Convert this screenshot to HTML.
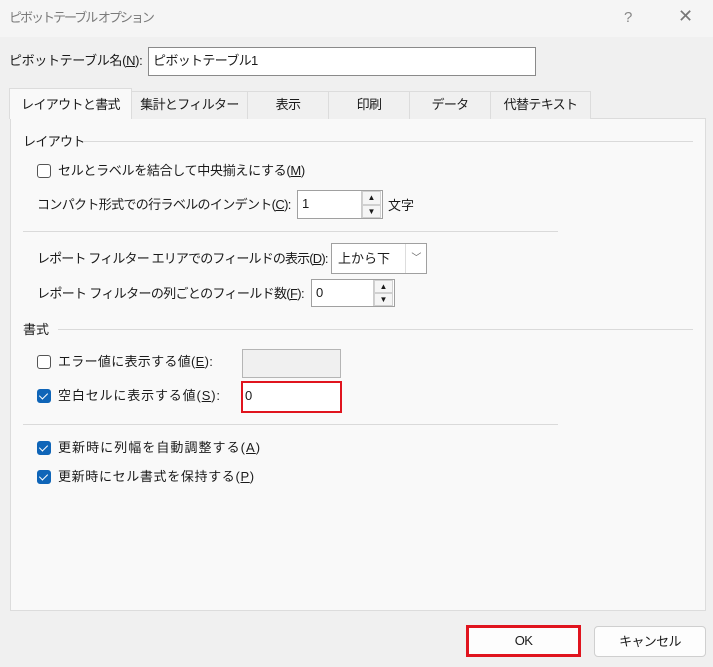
<!DOCTYPE html>
<html><head><meta charset="utf-8"><style>
*{box-sizing:border-box;margin:0;padding:0}
body{width:713px;height:667px;background:#f0f0f0;font-family:"Liberation Sans","Noto Sans CJK JP",sans-serif;font-size:13px;letter-spacing:-0.65px;color:#1a1a1a;position:relative;overflow:hidden}
.a{position:absolute;white-space:nowrap;line-height:18px}
.title{position:absolute;left:0;top:0;width:713px;height:37px;background:#f5f5f5}
.box{position:absolute;background:#fff;border:1px solid #a0a0a0}
.tab{position:absolute;top:91px;height:28px;border:1px solid #dcdcdc;border-bottom:none;background:#f0f0f0;text-align:center;line-height:26px}
.panel{position:absolute;left:10px;top:118px;width:696px;height:493px;background:#f9f9f9;border:1px solid #dcdcdc}
.hl{position:absolute;height:1px;background:#dadada}
.cb{position:absolute;width:14px;height:14px;border:1px solid #555;border-radius:3px;background:#fff}
.cb.on{background:#0f65b8;border-color:#0f65b8}
.cb.on:after{content:"";position:absolute;left:3px;top:1px;width:4px;height:7px;border:solid #fff;border-width:0 1.5px 1.5px 0;transform:rotate(45deg)}
.spin{position:absolute;width:20px;border-left:1px solid #ccc;background:#f5f5f5;letter-spacing:0}
.spin div{height:50%;border:1px solid #d0d0d0;font-size:8px;text-align:center;line-height:11px}
u{text-decoration:underline}
.btn{position:absolute;background:#fdfdfd;border:1px solid #cfcfcf;border-radius:4px;text-align:center;line-height:29px}
</style></head><body>
<div class="title"></div>
<div class="a" style="left:9px;top:9px;color:#7a7a7a;letter-spacing:-2px">ピボットテーブル オプション</div>
<div class="a" style="left:624px;top:9px;color:#888;font-size:15px">?</div>
<div class="a" style="left:678px;top:7px;color:#777;font-size:18px">✕</div>

<div class="a" style="left:9px;top:52px;letter-spacing:-0.35px">ピボットテーブル名(<u>N</u>):</div>
<div class="box" style="left:148px;top:47px;width:388px;height:29px;border-color:#8a8a8a"></div>
<div class="a" style="left:153px;top:52px">ピボットテーブル1</div>

<div class="panel"></div>
<div class="tab" style="left:131px;width:117px">集計とフィルター</div>
<div class="tab" style="left:247px;width:82px">表示</div>
<div class="tab" style="left:328px;width:82px">印刷</div>
<div class="tab" style="left:409px;width:82px">データ</div>
<div class="tab" style="left:490px;width:101px">代替テキスト</div>
<div class="tab" style="left:9px;top:88px;height:31px;width:123px;background:#f9f9f9;line-height:32px">レイアウトと書式</div>

<div class="a" style="left:23px;top:133px">レイアウト</div>
<div class="hl" style="left:83px;top:141px;width:610px"></div>
<div class="cb" style="left:37px;top:164px"></div>
<div class="a" style="left:58px;top:162px;letter-spacing:-0.3px">セルとラベルを結合して中央揃えにする(<u>M</u>)</div>
<div class="a" style="left:37px;top:196px">コンパクト形式での行ラベルのインデント(<u>C</u>):</div>
<div class="box" style="left:297px;top:190px;width:86px;height:29px"></div>
<div class="a" style="left:302px;top:195px">1</div>
<div class="spin" style="left:361px;top:191px;height:27px"><div>▲</div><div>▼</div></div>
<div class="a" style="left:388px;top:197px;letter-spacing:0">文字</div>
<div class="hl" style="left:23px;top:231px;width:535px"></div>

<div class="a" style="left:37px;top:250px;letter-spacing:-0.85px">レポート フィルター エリアでのフィールドの表示(<u>D</u>):</div>
<div class="box" style="left:331px;top:243px;width:96px;height:31px"></div>
<div class="a" style="left:338px;top:250px;letter-spacing:0">上から下</div>
<div style="position:absolute;left:405px;top:244px;width:21px;height:29px;border-left:1px solid #ddd;color:#666;font-size:10px;text-align:center;line-height:29px">﹀</div>
<div class="a" style="left:37px;top:285px">レポート フィルターの列ごとのフィールド数(<u>F</u>):</div>
<div class="box" style="left:311px;top:279px;width:84px;height:28px"></div>
<div class="a" style="left:316px;top:284px">0</div>
<div class="spin" style="left:373px;top:280px;height:26px"><div>▲</div><div>▼</div></div>

<div class="a" style="left:23px;top:321px;letter-spacing:0">書式</div>
<div class="hl" style="left:58px;top:329px;width:635px"></div>
<div class="cb" style="left:37px;top:355px"></div>
<div class="a" style="left:58px;top:353px;letter-spacing:0.3px">エラー値に表示する値(<u>E</u>):</div>
<div class="box" style="left:242px;top:349px;width:99px;height:29px;background:#f0f0f0;border-color:#b5b5b5"></div>
<div class="cb on" style="left:37px;top:389px"></div>
<div class="a" style="left:58px;top:387px;letter-spacing:0.85px">空白セルに表示する値(<u>S</u>):</div>
<div class="box" style="left:241px;top:381px;width:101px;height:32px;border:2px solid #e0141e"></div>
<div class="a" style="left:245px;top:387px">0</div>
<div class="hl" style="left:23px;top:424px;width:535px"></div>
<div class="cb on" style="left:37px;top:441px"></div>
<div class="a" style="left:58px;top:439px;letter-spacing:1.05px">更新時に列幅を自動調整する(<u>A</u>)</div>
<div class="cb on" style="left:37px;top:470px"></div>
<div class="a" style="left:58px;top:468px;letter-spacing:0.65px">更新時にセル書式を保持する(<u>P</u>)</div>

<div class="btn" style="left:466px;top:625px;width:115px;height:32px;border:3px solid #e0141e;border-radius:0;line-height:26px">OK</div>
<div class="btn" style="left:594px;top:626px;width:112px;height:31px">キャンセル</div>
</body></html>
